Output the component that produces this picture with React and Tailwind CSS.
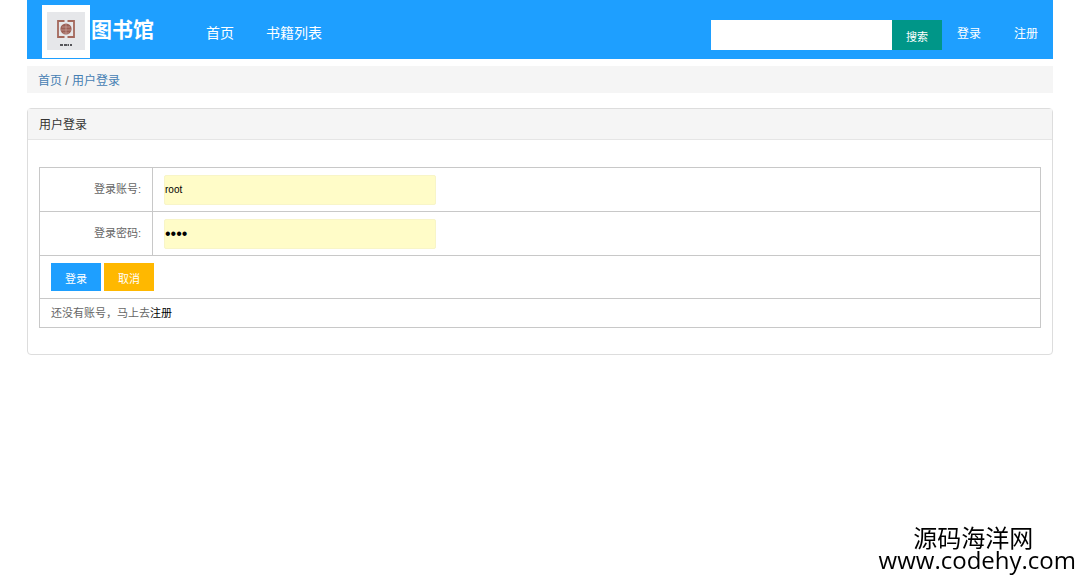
import { useState } from "react";

const navLinks = ["首页", "书籍列表"];
const userLinks = ["登录", "注册"];

function Logo() {
  return (
    <svg viewBox="0 0 48 53" className="w-12 h-[53px]" role="img" aria-label="图书馆">
      <rect width="48" height="53" fill="#fff" />
      <rect x="5" y="7" width="38" height="38" fill="#e6e7ea" />
      <g fill="none" stroke="#a4685c" strokeWidth="1.8">
        <path d="M22.5 16H16V32H22.5M25.5 16H32V32H25.5" />
      </g>
      <circle cx="24" cy="24" r="5.6" fill="#9a5f55" />
      <path d="M20 22H28M19 25H29M21 28H27M24 19V29" stroke="#c9a29b" strokeWidth="0.7" />
      <path d="M18 40H21M22 40H23M24 39V41M25.5 40H27M28 40H30" stroke="#55555a" strokeWidth="2" />
    </svg>
  );
}

function Header() {
  const [keyword, setKeyword] = useState("");

  return (
    <header className="flex h-[59px] bg-[#1e9fff] text-white pl-[15px]">
      <a href="#" className="flex items-center pt-1">
        <Logo />
        <span className="text-[21px] leading-6 font-bold pl-px pb-1">图书馆</span>
      </a>
      <nav className="flex items-center gap-8 pl-13 pt-1.5 text-sm">
        {navLinks.map((item) => (
          <a key={item} href="#">{item}</a>
        ))}
      </nav>
      <form className="flex ml-auto mt-5 h-[30px] text-[11px]" onSubmit={(e) => e.preventDefault()}>
        <input
          type="text"
          aria-label="搜索"
          className="w-[181px] bg-white text-black px-2 outline-0"
          value={keyword}
          onChange={(e) => setKeyword(e.target.value)}
        />
        <button className="bg-[#009688] px-3.5 pt-1">搜索</button>
      </form>
      <div className="flex items-center gap-[33px] px-[15px] pt-2 text-xs">
        {userLinks.map((item) => (
          <a key={item} href="#">{item}</a>
        ))}
      </div>
    </header>
  );
}

function LoginForm() {
  const [account, setAccount] = useState("root");
  const [password, setPassword] = useState("root");

  const cell = "border border-[#c8c8c8] px-[11px]";
  const field = "block w-[272px] h-[30px] border border-[#f8f5c8] rounded-xs bg-[#fffcc8] text-black outline-0";

  const reset = () => {
    setAccount("");
    setPassword("");
  };

  return (
    <form onSubmit={(e) => e.preventDefault()}>
      <table className="w-full border-collapse text-[11px] text-[#666]">
        <tbody>
          <tr className="h-11">
            <td className={`${cell} w-[113px] text-right`}>
              <label htmlFor="account">登录账号:</label>
            </td>
            <td className={cell}>
              <input id="account" type="text" className={`${field} text-[10px]`} value={account} onChange={(e) => setAccount(e.target.value)} />
            </td>
          </tr>
          <tr className="h-11">
            <td className={`${cell} text-right`}>
              <label htmlFor="password">登录密码:</label>
            </td>
            <td className={cell}>
              <input id="password" type="password" className={`${field} text-base`} value={password} onChange={(e) => setPassword(e.target.value)} />
            </td>
          </tr>
          <tr className="h-[43px]">
            <td colSpan={2} className={cell}>
              <div className="flex gap-[3px] text-white">
                <button type="submit" className="h-7 px-3.5 pt-1 bg-[#1e9fff]">登录</button>
                <button type="button" className="h-7 px-3.5 pt-1 bg-[#ffb800]" onClick={reset}>取消</button>
              </div>
            </td>
          </tr>
          <tr className="h-[29px]">
            <td colSpan={2} className={cell}>
              还没有账号，马上去<a href="#" className="text-black">注册</a>
            </td>
          </tr>
        </tbody>
      </table>
    </form>
  );
}

function App() {
  return (
    <div className="min-h-screen bg-white font-['Liberation_Sans','Noto_Sans_CJK_SC',sans-serif]">
      <div className="w-[95%] mx-auto">
        <Header />
        <div className="mt-[7px] px-[11px] pt-[7px] pb-1 bg-[#f5f5f5] text-xs leading-4 text-[#666]">
          <a href="#" className="text-[#4580b3]">首页</a> / <a href="#" className="text-[#4580b3]">用户登录</a>
        </div>
        <main className="mt-[15px] border border-[#ddd] rounded-sm">
          <h1 className="px-[11px] pt-2 pb-1.5 bg-[#f5f5f5] border-b border-[#e5e5e5] text-xs leading-4 text-[#333]">用户登录</h1>
          <div className="px-[11px] pt-[27px] pb-[26px]">
            <LoginForm />
          </div>
        </main>
      </div>
      <div className="fixed right-1 bottom-2.5 flex flex-col items-center text-2xl text-black">
        <span className="leading-[22px] pr-2">源码海洋网</span>
        <span className="leading-5 font-medium font-['Open_Sans',sans-serif]">www.codehy.com</span>
      </div>
    </div>
  );
}

export default App;
